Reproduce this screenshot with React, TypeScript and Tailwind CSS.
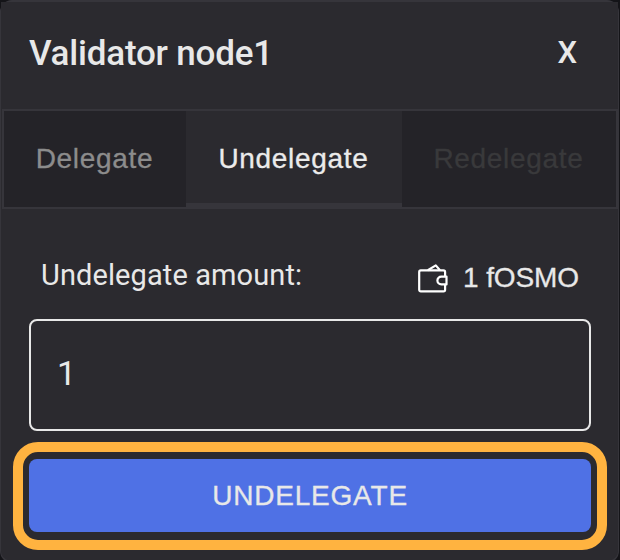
import { useState } from 'react';

function WalletIcon() {
  return (
    <svg width="30" height="30" viewBox="0 0 30 30" fill="none" stroke="#fff" strokeWidth="2.2" strokeLinejoin="round" className="mt-px block shrink-0">
      <path d="M27.1 13V8a1.6 1.6 0 0 0-1.6-1.6H2.8A1.6 1.6 0 0 0 1.2 8v17.8a1.6 1.6 0 0 0 1.6 1.6h22.7a1.6 1.6 0 0 0 1.6-1.6v-5.2" />
      <path d="M28.5 12.6h-5.2a3.9 3.9 0 0 0 0 7.8h5.2z" />
      <path d="M9.8 6.2l8-4.8 4.2 4.8" />
    </svg>
  );
}

const tabs = [
  { label: 'Delegate', style: 'w-[182px] bg-[#242328] text-[#8c8c8c]' },
  { label: 'Undelegate', style: 'w-[216px] border-b-4 border-[#36353b] pt-1 text-[#ebebeb]' },
  { label: 'Redelegate', style: 'flex-1 bg-[#242328] text-[#39393b]' },
];

export default function App() {
  const [amount, setAmount] = useState('1');
  return (
    <main className="h-[560px] w-[620px] overflow-hidden bg-[#141418] font-['Liberation_Sans',sans-serif] text-[#e8e8e8]">
      <section className="h-[563px] w-[619px] rounded-xl border-2 border-r-1 border-l-1 border-[#36353b] bg-[#2b2a2f]">
        <header className="flex h-[107px] items-start justify-between bg-[#2b2a2f] pr-[41px] pl-7">
          <h1 className="mt-[31px] font-[Roboto,sans-serif] text-[35px] leading-[42px] font-medium tracking-[-0.2px] whitespace-nowrap">Validator node1</h1>
          <button className="mt-[31px] font-[Roboto,sans-serif] text-[31px] leading-[40px] font-medium">X</button>
        </header>
        <nav className="ml-px flex h-[100px] border-2 border-[#36353b]">
          {tabs.map((tab) => (
            <button key={tab.label} className={`flex items-center justify-center pr-px text-[28px] leading-8 tracking-[0.7px] [-webkit-text-stroke:0.3px_currentColor] ${tab.style}`}>
              {tab.label}
            </button>
          ))}
        </nav>
        <form className="px-7 pt-[54px]" onSubmit={(e) => e.preventDefault()}>
          <div className="flex h-[56px] items-start justify-between pr-[11px] pl-3">
            <label htmlFor="amount" className="-mt-[6px] font-[Roboto,sans-serif] text-[29px] leading-9 tracking-[0.1px]">Undelegate amount:</label>
            <div className="flex items-start gap-[15px]">
              <WalletIcon />
              <span className="-mt-px text-[28px] leading-8 tracking-[-0.1px] [-webkit-text-stroke:0.3px_currentColor]">1 fOSMO</span>
            </div>
          </div>
          <input id="amount" value={amount} onChange={(e) => setAmount(e.target.value)} className="block h-[112px] w-[562px] rounded-lg border-2 border-[#e8e8e8] pr-7 pb-1 pl-[26px] font-[Roboto,sans-serif] text-[34px] outline-none" />
          <div className="-mx-4 mt-[11px] w-[594px] rounded-[25px] border-10 border-[#ffb340] px-[6px] pt-[7px] pb-2">
            <button className="flex h-[73px] w-[562px] items-center justify-center rounded-lg bg-[#4f71e5] text-[28px] tracking-[0.8px] [-webkit-text-stroke:0.3px_currentColor]">
              UNDELEGATE
            </button>
          </div>
        </form>
      </section>
    </main>
  );
}
